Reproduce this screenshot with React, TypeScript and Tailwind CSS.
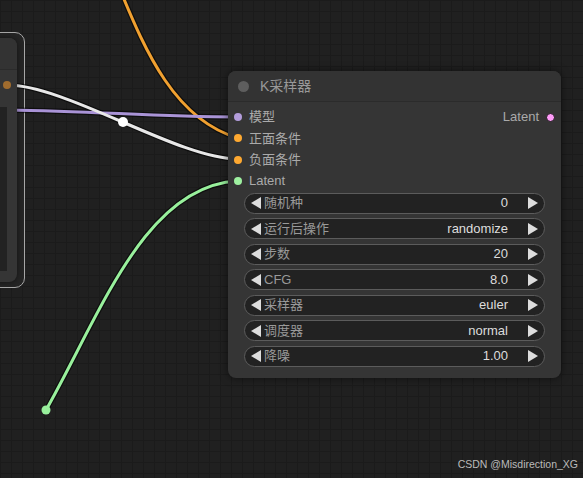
import React from "react";

const inputs = [
  { label: "模型", color: "#b39ddb" },
  { label: "正面条件", color: "#ffa931" },
  { label: "负面条件", color: "#ffa931" },
  { label: "Latent", color: "#9ef0a0" },
];

const widgets = [
  { label: "随机种", value: "0" },
  { label: "运行后操作", value: "randomize" },
  { label: "步数", value: "20" },
  { label: "CFG", value: "8.0" },
  { label: "采样器", value: "euler" },
  { label: "调度器", value: "normal" },
  { label: "降噪", value: "1.00" },
];

const wires = [
  { d: "M 121 -8 C 145 50, 175 120, 238 138", color: "#f0a030" },
  { d: "M 7 110 C 100 111, 150 117, 238 117", color: "#a993d6" },
  { d: "M 7 85 C 67 85, 178 159, 238 159", color: "#e8e8e8" },
  { d: "M 46 410 C 100 315, 145 185, 238 181", color: "#98f09c" },
];

function Arrow({ dir }: { dir: "left" | "right" }) {
  return (
    <svg width="10" height="12" viewBox="0 0 10 12" className="shrink-0">
      <polygon
        points={dir === "left" ? "10,0 10,12 0,6" : "0,0 0,12 10,6"}
        fill="#dddddd"
      />
    </svg>
  );
}

function Widget({ label, value }: { label: string; value: string }) {
  return (
    <div className="flex h-[21px] items-center rounded-full border border-[#5c5c5c] bg-[#222222] pl-[6px] pr-[6px]">
      <Arrow dir="left" />
      <span className="ml-[3px] text-[13px] text-[#999999]">{label}</span>
      <span className="ml-auto mr-[20px] text-[13px] text-[#dddddd]">{value}</span>
      <Arrow dir="right" />
    </div>
  );
}

export default function App() {
  return (
    <div
      className="relative h-[478px] w-[583px] overflow-hidden bg-[#202020] bg-[linear-gradient(#1b1b1b_1px,transparent_1px),linear-gradient(90deg,#1b1b1b_1px,transparent_1px)] bg-size-[11px_11px]"
      style={{ fontFamily: '"Liberation Sans", Arial, "Noto Sans CJK SC", sans-serif' }}
    >
      {/* selection outline of the left node */}
      <div className="absolute left-[-20px] top-[32px] h-[256px] w-[45px] rounded-[10px] border border-[#a8a8a8] bg-[#252525]" />

      {/* links */}
      <svg className="absolute inset-0" width="583" height="478">
        {wires.map((w, i) => (
          <path key={`o${i}`} d={w.d} fill="none" stroke="rgba(0,0,0,0.55)" strokeWidth="5.5" />
        ))}
        {wires.map((w, i) => (
          <path key={`c${i}`} d={w.d} fill="none" stroke={w.color} strokeWidth="3" />
        ))}
        <circle cx="123" cy="122" r="5" fill="#ffffff" />
        <circle cx="46" cy="410" r="4.5" fill="#98f09c" />
      </svg>

      {/* left node (cut off) */}
      <div className="absolute left-[-20px] top-[38px] flex h-[244px] w-[37px] flex-col overflow-hidden rounded-[8px] bg-[#353535] shadow-[0_0_6px_rgba(0,0,0,0.5)]">
        <div className="h-[32px] shrink-0 border-b border-[#2b2b2b] bg-[#333333]" />
        <div className="relative flex-1">
          <span className="absolute left-[23px] top-[11px] h-[8px] w-[8px] rounded-full bg-[#a06c2e]" />
          <div className="absolute left-0 top-[37px] h-[164px] w-[27px] bg-[#222222]" />
        </div>
      </div>

      {/* K sampler node */}
      <div className="absolute left-[228px] top-[71px] flex h-[307px] w-[333px] flex-col rounded-[8px] bg-[#353535] shadow-[0_0_8px_rgba(0,0,0,0.55)]">
        <div className="flex h-[31px] shrink-0 items-center rounded-t-[8px] border-b border-[#2b2b2b] bg-[#333333] pl-[10px]">
          <span className="h-[11px] w-[11px] rounded-full bg-[#5e5e5e]" />
          <span className="ml-[11px] text-[14px] text-[#999999]">K采样器</span>
        </div>

        <div className="flex flex-col pt-[4.5px]">
          {inputs.map((inp, i) => (
            <div key={inp.label} className="flex h-[21.3px] items-center">
              <span
                className="ml-[6px] h-[8px] w-[8px] rounded-full"
                style={{ backgroundColor: inp.color }}
              />
              <span className="ml-[7px] text-[13px] text-[#aaaaaa]">{inp.label}</span>
              {i === 0 && (
                <>
                  <span className="ml-auto text-[13px] text-[#aaaaaa]">Latent</span>
                  <span className="ml-[7px] mr-[6px] h-[9px] w-[9px] rounded-full border border-[#1a1a1a] bg-[#ff9cf9]" />
                </>
              )}
            </div>
          ))}
        </div>

        <div className="mx-[16px] mt-[1px] flex flex-col gap-[4.5px]">
          {widgets.map((w) => (
            <Widget key={w.label} label={w.label} value={w.value} />
          ))}
        </div>
      </div>

      <div className="absolute bottom-[5px] right-[5px] text-[10.5px] text-[#bbbbbb]">
        CSDN @Misdirection_XG
      </div>
    </div>
  );
}
